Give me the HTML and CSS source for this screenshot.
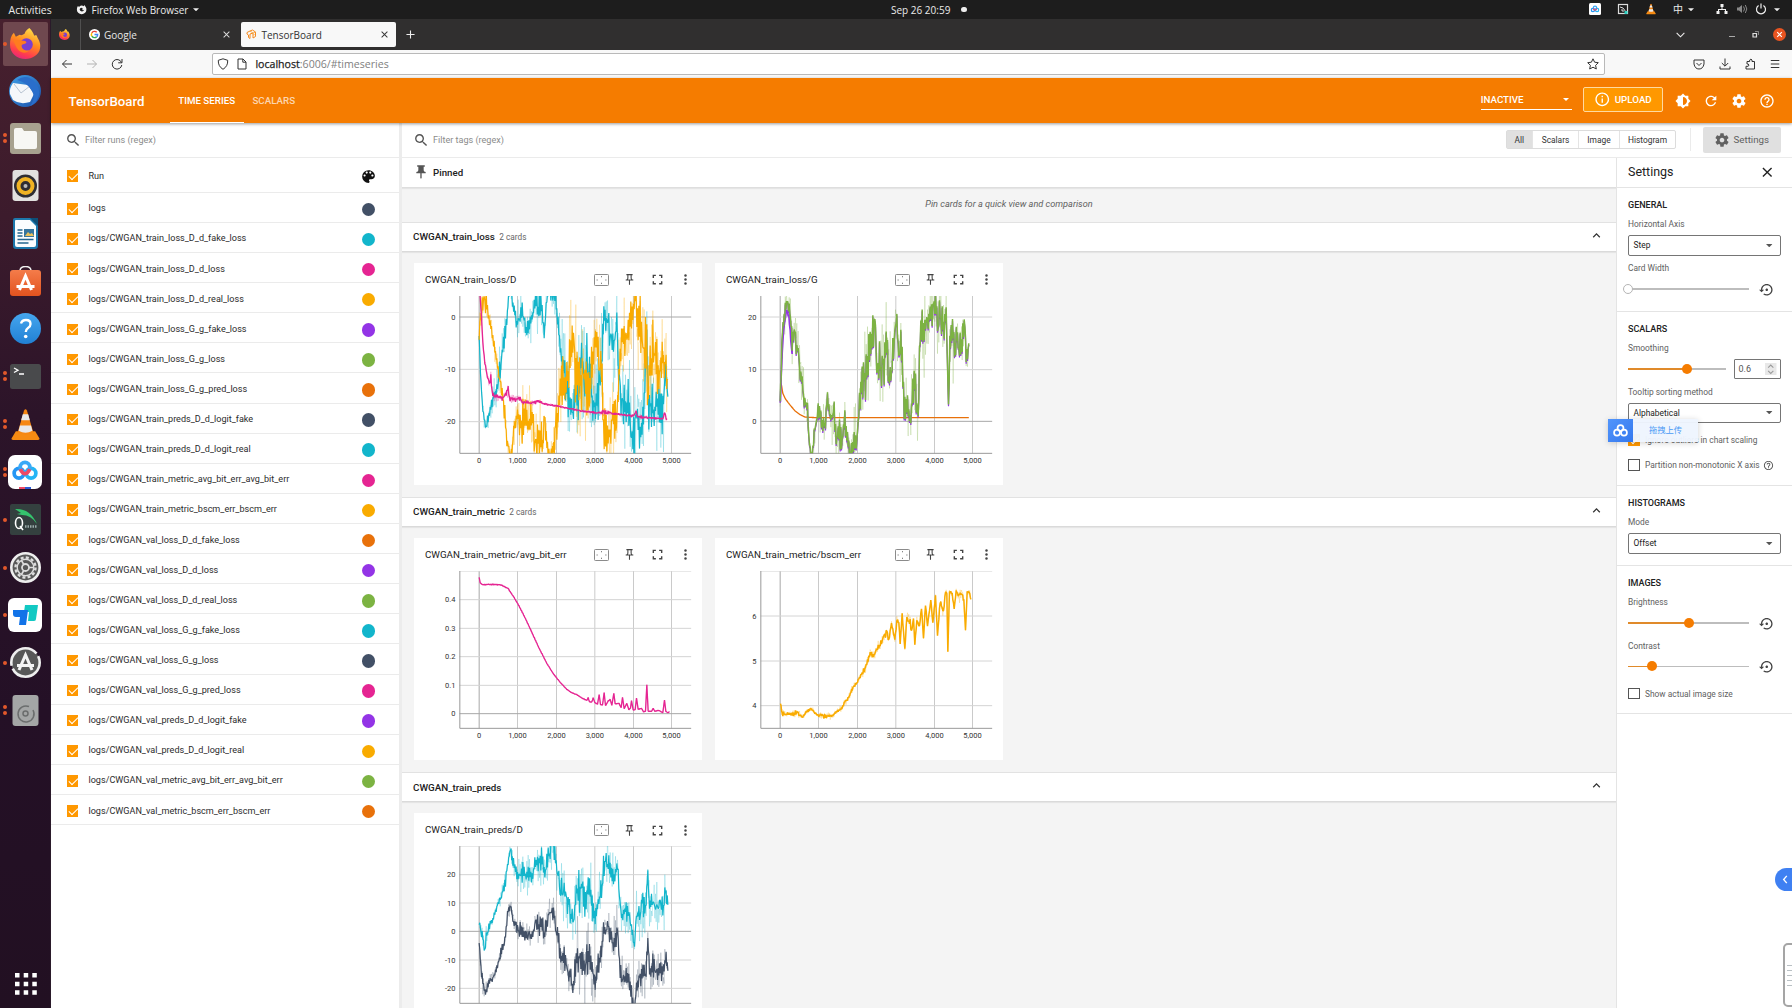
FILE: index.html
```html
<!DOCTYPE html>
<html lang="en">
<head>
<meta charset="utf-8">
<title>TensorBoard</title>
<link rel="stylesheet" href="styles.css">
</head>
<body>
<svg class="defs" aria-hidden="true">
  <defs>
    <linearGradient id="gFox" x1="0.7" y1="0" x2="0.3" y2="1"><stop offset="0" stop-color="#ffe14a"/><stop offset=".45" stop-color="#ff8a1f"/><stop offset=".8" stop-color="#ff3b4f"/><stop offset="1" stop-color="#e3267e"/></linearGradient>
    <linearGradient id="gBird" x1="0" y1="0" x2="1" y2="1"><stop offset="0" stop-color="#3fa0e8"/><stop offset="1" stop-color="#1b4fa8"/></linearGradient>
    <linearGradient id="gHelp" x1="0" y1="0" x2="0" y2="1"><stop offset="0" stop-color="#45a6ee"/><stop offset="1" stop-color="#2180d4"/></linearGradient>
    <linearGradient id="gBag" x1="0" y1="0" x2="0" y2="1"><stop offset="0" stop-color="#f47c4a"/><stop offset="1" stop-color="#e2531f"/></linearGradient>
  </defs>
  <symbol id="search" viewBox="0 0 24 24"><path d="M15.5 14h-.79l-.28-.27C15.41 12.59 16 11.11 16 9.5 16 5.91 13.09 3 9.5 3S3 5.91 3 9.5 5.91 16 9.5 16c1.61 0 3.09-.59 4.23-1.57l.27.28v.79l5 4.99L20.49 19l-4.99-5zm-6 0C7.01 14 5 11.99 5 9.5S7.01 5 9.5 5 14 7.01 14 9.5 11.99 14 9.5 14z"/></symbol>
  <symbol id="palette" viewBox="0 0 24 24"><path d="M12 3a9 9 0 0 0 0 18c.83 0 1.5-.67 1.5-1.5 0-.39-.15-.74-.39-1.01-.23-.26-.38-.61-.38-.99 0-.83.67-1.5 1.5-1.5H16c2.76 0 5-2.24 5-5 0-4.42-4.03-8-9-8zm-5.5 9c-.83 0-1.5-.67-1.5-1.5S5.67 9 6.5 9 8 9.67 8 10.5 7.33 12 6.5 12zm3-4C8.67 8 8 7.33 8 6.5S8.67 5 9.5 5s1.500.67 1.500 1.500S10.330 8 9.500 8zm5 0c-.83 0-1.500-.67-1.500-1.500S13.670 5 14.500 5s1.500.67 1.500 1.500S15.330 8 14.500 8zm3 4c-.83 0-1.500-.67-1.500-1.500S16.670 9 17.500 9s1.500.67 1.500 1.500-.67 1.500-1.500 1.500z"/></symbol>
  <symbol id="bright" viewBox="0 0 24 24"><path d="M20 15.310L23.310 12 20 8.690V4h-4.690L12 .69 8.690 4H4v4.690L.69 12 4 15.310V20h4.690L12 23.310 15.310 20H20v-4.690zM12 18V6c3.310 0 6 2.690 6 6s-2.690 6-6 6z"/></symbol>
  <symbol id="refresh" viewBox="0 0 24 24"><path d="M17.650 6.350C16.200 4.900 14.210 4 12 4c-4.420 0-7.990 3.580-7.990 8s3.570 8 7.990 8c3.730 0 6.840-2.550 7.730-6h-2.080c-.82 2.330-3.040 4-5.650 4-3.310 0-6-2.690-6-6s2.690-6 6-6c1.660 0 3.140.69 4.220 1.780L13 11h7V4l-2.350 2.350z"/></symbol>
  <symbol id="gear" viewBox="0 0 24 24"><path d="M19.430 12.980c.04-.32.07-.64.07-.98s-.03-.66-.07-.98l2.110-1.650c.19-.15.24-.42.12-.64l-2-3.460c-.12-.22-.39-.3-.61-.22l-2.490 1c-.52-.4-1.080-.73-1.690-.98l-.38-2.650C14.460 2.180 14.250 2 14 2h-4c-.25 0-.46.18-.49.42l-.38 2.650c-.61.25-1.170.59-1.690.98l-2.490-1c-.23-.09-.49 0-.61.22l-2 3.460c-.13.22-.07.49.12.64l2.110 1.650c-.04.32-.07.65-.07.98s.03.66.07.98l-2.110 1.650c-.19.15-.24.42-.12.64l2 3.460c.12.22.39.3.61.22l2.490-1c.52.4 1.080.73 1.690.98l.38 2.650c.03.24.24.42.49.42h4c.25 0 .46-.18.49-.42l.38-2.650c.61-.25 1.170-.59 1.690-.98l2.490 1c.23.09.49 0 .61-.22l2-3.460c.12-.22.07-.49-.12-.64l-2.110-1.650zM12 15.500c-1.930 0-3.500-1.570-3.500-3.500s1.570-3.500 3.500-3.500 3.500 1.570 3.500 3.500-1.570 3.500-3.500 3.500z"/></symbol>
  <symbol id="help" viewBox="0 0 24 24"><path d="M11 18h2v-2h-2v2zm1-16C6.480 2 2 6.480 2 12s4.480 10 10 10 10-4.480 10-10S17.520 2 12 2zm0 18c-4.410 0-8-3.590-8-8s3.590-8 8-8 8 3.590 8 8-3.590 8-8 8zm0-14c-2.210 0-4 1.790-4 4h2c0-1.100.9-2 2-2s2 .9 2 2c0 2-3 1.750-3 5h2c0-2.250 3-2.500 3-5 0-2.210-1.790-4-4-4z"/></symbol>
  <symbol id="info" viewBox="0 0 24 24"><path d="M11 7h2v2h-2zm0 4h2v6h-2zm1-9C6.480 2 2 6.480 2 12s4.480 10 10 10 10-4.480 10-10S17.520 2 12 2zm0 18c-4.410 0-8-3.590-8-8s3.590-8 8-8 8 3.590 8 8-3.590 8-8 8z"/></symbol>
  <symbol id="pin" viewBox="0 0 24 24"><path d="M16 9V4h1c.55 0 1-.45 1-1s-.45-1-1-1H7c-.55 0-1 .45-1 1s.45 1 1 1h1v5c0 1.660-1.340 3-3 3v2h5.970v7l1 1 1-1v-7H19v-2c-1.660 0-3-1.340-3-3z"/></symbol>
  <symbol id="pinO" viewBox="0 0 24 24"><path d="M14 4v5c0 1.120.37 2.160 1 3H9c.65-.86 1-1.900 1-3V4h4m3-2H7c-.55 0-1 .45-1 1s.45 1 1 1h1v5c0 1.660-1.340 3-3 3v2h5.970v7l1 1 1-1v-7H19v-2c-1.660 0-3-1.340-3-3V4h1c.55 0 1-.45 1-1s-.45-1-1-1z"/></symbol>
  <symbol id="full" viewBox="0 0 24 24"><path d="M3 3h6v2.600H5.600V9H3zM15 3h6v6h-2.600V5.600H15zM3 15h2.600v3.400H9V21H3zM18.400 15H21v6h-6v-2.600h3.400z"/></symbol>
  <symbol id="more" viewBox="0 0 24 24"><circle cx="12" cy="4.500" r="2.300"/><circle cx="12" cy="12" r="2.300"/><circle cx="12" cy="19.500" r="2.300"/></symbol>
  <symbol id="fit" viewBox="0 0 15 12"><rect x=".5" y=".5" width="14" height="11" rx=".8" fill="none" stroke="#8b8b8b"/><path d="M7.500 2v1.300M7.500 8.700V10M2.500 6h1.300M11.200 6h1.300" stroke="#777" stroke-width=".9" stroke-dasharray="1.300"/></symbol>
  <symbol id="up" viewBox="0 0 24 24"><path d="M12 8l-6 6 1.410 1.410L12 10.830l4.590 4.580L18 14z"/></symbol>
  <symbol id="x" viewBox="0 0 24 24"><path d="M19 6.410L17.590 5 12 10.590 6.410 5 5 6.410 10.590 12 5 17.590 6.410 19 12 13.410 17.590 19 19 17.590 13.410 12z"/></symbol>
  <symbol id="reset" viewBox="0 0 24 24"><path d="M14 12c0-1.100-.9-2-2-2s-2 .9-2 2 .9 2 2 2 2-.9 2-2zm-2-9c-4.970 0-9 4.030-9 9H0l4 4 4-4H5c0-3.870 3.130-7 7-7s7 3.130 7 7-3.130 7-7 7c-1.510 0-2.910-.49-4.060-1.300l-1.420 1.440C8.040 20.300 9.940 21 12 21c4.970 0 9-4.030 9-9s-4.030-9-9-9z"/></symbol>
  <symbol id="tri" viewBox="0 0 10 5"><path d="M0 0h10L5 5z"/></symbol>
  <symbol id="fox" viewBox="0 0 32 32"><path d="M20 0c3 3 4 5 5 8 2-1 3 0 3 1 2 4 4 7 3 12-1 7-8 11-15 11C7 32 0 26 0 17c0-5 1-9 4-12l2 4 4-2c2 1 3 0 5-1 1-3 3-5 5-6z" fill="url(#gFox)"/><circle cx="17" cy="17" r="6.500" fill="#7a3fd0"/><path d="M3 12c3 1 6 0 9 1 3 0 5 1 5 2-1 2-4 1-5 3 0 4 4 6 8 5-3 4-9 3-12-1-2-3-3-6-5-10z" fill="#ff7c1f"/></symbol>
  <symbol id="cone" viewBox="0 0 30 32"><path d="M5 23h20l4.500 7.500c0 1-.5 1.500-1.500 1.500H2c-1 0-1.500-.5-1.500-1.500z" fill="#f68b12"/><path d="M13.500 1.500Q15-.8 16.500 1.500L23 24q-8 5-16 0z" fill="#f68712"/><path d="M12.200 5.500h5.600l1.700 6h-9zM9.300 17h11.400l1.500 5.500q-7.200 4-14.400 0z" fill="#e9e9e9"/></symbol>
  <symbol id="cloud" viewBox="0 0 28 22"><g fill="none" stroke-width="4"><circle cx="7.500" cy="14" r="5.200" stroke="#2496f4"/><circle cx="20.500" cy="14" r="5.200" stroke="#25b5f5"/><circle cx="14" cy="7.500" r="5.200" stroke="#39a9f7"/><path d="M9 9.500q2 5 5 5t5-5" stroke="#ee4a66"/></g></symbol>
  <symbol id="cloudW" viewBox="0 0 28 24"><g fill="none" stroke="#fff" stroke-width="3.200"><circle cx="7.500" cy="16" r="5.500"/><circle cx="20.500" cy="16" r="5.500"/><circle cx="14" cy="7.500" r="5.500"/></g></symbol>
</svg>

<header class="topbar">
  <span class="tb-act">Activities</span>
  <svg class="tb-fox" viewBox="0 0 20 20"><path d="M3 4l3 1c2-2 5-3 8-1l1-2c4 4 5 8 3 12-3 5-10 6-14 2C1 13 1 8 3 4zm7 3l3 2-2 1c1 2 3 1 4 0-1 4-6 5-8 1-1-2 1-4 3-4z" fill="#f2f2f2" fill-rule="evenodd"/></svg>
  <span>Firefox Web Browser</span><svg class="caret" fill="#eee"><use href="#tri"/></svg>
  <span class="clock">Sep 26 20:59</span><i class="clock-dot"></i>
  <div class="tray">
    <svg style="left:0" viewBox="0 0 12 12"><rect width="12" height="12" rx="1.500" fill="#fff"/><use href="#cloud" x="1.500" y="2" width="9" height="8"/></svg>
    <svg style="left:28px" viewBox="0 0 12 12"><rect x="1.500" y="1.500" width="9" height="9" fill="none" stroke="#ddd" stroke-width="1.200"/><path d="M3 4l3 1 3 4M4 7h2v2" stroke="#ddd" fill="none"/><path d="M7.500 8h3v3h-3z" fill="#30cfc0"/></svg>
    <svg style="left:56px" viewBox="0 0 12 12"><use href="#cone" x="1" y="0" width="10" height="12"/></svg>
    <span class="ime">中</span>
    <svg class="caret" style="left:99px" fill="#eee"><use href="#tri"/></svg>
    <svg style="left:127px" viewBox="0 0 12 12"><path d="M4.500 1h3v3h-3zM.5 8h3v3h-3zM8.500 8h3v3h-3zM5.500 4h1v2H10v2H9V7H3v1H2V6h3.500z" fill="#f2f2f2"/></svg>
    <svg style="left:147px" viewBox="0 0 12 12"><path d="M1 4.500h2L6 2v8L3 7.500H1z" fill="#888"/><path d="M7.500 3.500q2 2.500 0 5M9.300 2q3 4 0 8" stroke="#888" fill="none"/></svg>
    <svg style="left:166px" viewBox="0 0 12 12"><path d="M3.600 2.500a4.500 4.500 0 1 0 4.800 0M6 .5v5" stroke="#eee" stroke-width="1.200" fill="none"/></svg>
    <svg class="caret" style="left:185px" fill="#eee"><use href="#tri"/></svg>
  </div>
</header>

<div class="desktop">
  <nav class="dock">
    <div class="app on d1"><svg viewBox="0 0 32 32"><use href="#fox"/></svg></div>
    <div class="app"><svg class="big" viewBox="0 0 34 34"><circle cx="17" cy="17" r="16" fill="url(#gBird)"/><path d="M2 20Q1 15 5 9l15 2 6 9-4 8q-10 3-17-2z" fill="#f5f7fa"/><path d="M6 10l7 9 9-7" stroke="#b9c4d2" fill="none"/><path d="M9 6q10-7 19 3 6 9 1 17-2 4-7 6 6-8 2-15-4-8-15-11z" fill="#2a6ecb"/></svg></div>
    <div class="app d2"><svg viewBox="0 0 31 31"><rect width="31" height="31" rx="3" fill="#a7a18f"/><path d="M4 7q0-2 2-2h6l2 3h11q2 0 2 2v14q0 2-2 2H6q-2 0-2-2z" fill="#f7f7f4"/></svg></div>
    <div class="app"><svg viewBox="0 0 31 31"><rect x="2.500" width="26" height="31" rx="3" fill="#e2e1df"/><circle cx="15.500" cy="16" r="11.500" fill="#2e2e33"/><circle cx="15.500" cy="16" r="7" fill="none" stroke="#f0b323" stroke-width="4"/><circle cx="15.500" cy="16" r="2" fill="#bbb"/></svg></div>
    <div class="app"><svg viewBox="0 0 31 31"><path d="M5 0h16l7 7v21q0 3-3 3H6q-3 0-3-3V2q0-2 2-2z" fill="#1d78ac"/><path d="M6 2h14l6 6v19q0 2-2 2H7q-2 0-2-2V3q0-1 1-1z" fill="#fbfdfe"/><path d="M7.500 12h5M7.500 15h5M7.500 18h5M7.500 21.500h16M7.500 25h11" stroke="#24658f" stroke-width="1.600"/><path d="M14 11h10v8H14z" fill="#36759d"/><path d="M15 18l3-4 2 2 2-1 2 3z" fill="#eac15c"/><path d="M20 0h8v8z" fill="#0d4f78"/></svg></div>
    <div class="app"><svg viewBox="0 0 31 31"><path d="M10 5q0-4.500 5.500-4.500T21 5" fill="none" stroke="#eee" stroke-width="1.500"/><rect y="4" width="31" height="26" rx="3" fill="url(#gBag)"/><path d="M9.500 24l6-14 6 14M6.500 20.500h18" stroke="#fff" stroke-width="3" fill="none"/></svg></div>
    <div class="app"><svg viewBox="0 0 31 31"><circle cx="15.500" cy="15.500" r="15.500" fill="url(#gHelp)"/><path d="M11 10.500q1-3.500 5-3.500 4.500 0 4.500 4 0 2.500-2.500 4-2.200 1.500-2.200 4" stroke="#fff" stroke-width="2.400" fill="none"/><circle cx="15.700" cy="23.500" r="1.800" fill="#fff"/></svg></div>
    <div class="app d2"><svg viewBox="0 0 31 31"><rect y="3" width="31" height="25" rx="2.500" fill="#494a4c"/><path d="M4 7l4 2.200L4 11.500M9 13h5" stroke="#fff" stroke-width="1.300" fill="none"/></svg></div>
    <div class="app d2"><svg viewBox="0 0 31 31"><use href="#cone" x="1" width="29" height="31"/></svg></div>
    <div class="app d2"><svg class="big" viewBox="0 0 34 34"><rect width="34" height="34" rx="7" fill="#fff"/><use href="#cloud" x="4" y="5" width="26" height="21"/><path d="M11 32h6v2h-6z" fill="#ee4a66"/><path d="M17 32h6v2h-6z" fill="#2a5bd7"/></svg></div>
    <div class="app d1"><svg viewBox="0 0 31 31"><rect width="31" height="31" rx="2" fill="#34403f"/><path d="M5 5q15-1 22 15-6-9-15-9l-5-1 4-1z" fill="#35c46d"/><ellipse cx="9" cy="19" rx="3.500" ry="5.500" fill="none" stroke="#fff" stroke-width="1.600"/><path d="M10 22l3 4" stroke="#fff" stroke-width="1.500"/><path d="M15 22.500h12" stroke="#9aa" stroke-width="2.500" stroke-dasharray="1.500 1"/></svg></div>
    <div class="app d1"><svg viewBox="0 0 31 31"><circle cx="15.500" cy="15.500" r="14.200" fill="#585858" stroke="#eee" stroke-width="2.600"/><circle cx="15.500" cy="15.500" r="10" fill="none" stroke="#ddd" stroke-width="2.400" stroke-dasharray="3 2.236"/><circle cx="15.500" cy="15.500" r="8.300" fill="none" stroke="#ddd" stroke-width="1.400"/><circle cx="15.500" cy="15.500" r="3.500" fill="none" stroke="#ddd" stroke-width="1.800"/><path d="M13.800 12.500L11.500 8.500M19 15.500h4.500M13.800 18.500l-2.300 4" stroke="#ddd" stroke-width="1.600"/></svg></div>
    <div class="app d1"><svg class="big" viewBox="0 0 34 34"><rect width="34" height="34" rx="6" fill="#fff"/><path d="M17 7h13l-2 14q0 2-2 2h-6l1-9h-5z" fill="#12c9c3"/><path d="M5 12h15l-2 15h-7l1-8H8q-3 0-3-3z" fill="#1173e8"/></svg></div>
    <div class="app d1"><svg viewBox="0 0 31 31"><circle cx="15.500" cy="15.500" r="14.200" fill="#585858" stroke="#eee" stroke-width="2.600" stroke-dasharray="38 3"/><path d="M9 23l6.500-15L22 23M7 18.500h17" stroke="#f4f4f4" stroke-width="3" fill="none"/></svg></div>
    <div class="app d2"><svg viewBox="0 0 31 31"><rect x="2.500" width="26" height="31" rx="3" fill="#a4a6a6"/><path d="M19 11.500a8 8 0 1 0 4 3.500" fill="none" stroke="#6b6d6d" stroke-width="1.500"/><circle cx="15.500" cy="18.500" r="2.500" fill="none" stroke="#6b6d6d" stroke-width="1.500"/></svg></div>
    <svg class="grid9" viewBox="0 0 22 22" fill="#fff"><path d="M0 0h4.500v4.500H0zM8.700 0h4.500v4.500H8.700zM17.300 0h4.500v4.500h-4.500zM0 8.700h4.500v4.500H0zM8.700 8.700h4.500v4.500H8.700zM17.300 8.700h4.500v4.500h-4.500zM0 17.300h4.500v4.500H0zM8.700 17.300h4.500v4.500H8.700zM17.300 17.300h4.500v4.500h-4.500z"/></svg>
  </nav>

  <div class="browser">
    <div class="tabs">
      <div class="tab pinned"><svg viewBox="0 0 32 32"><use href="#fox"/></svg></div>
      <div class="tab goog"><svg viewBox="0 0 22 22"><circle cx="11" cy="11" r="11" fill="#fff"/><g fill="none" stroke-width="2.800"><path d="M15.500 6.500A6.300 6.300 0 0 0 5.700 7.700" stroke="#e94335"/><path d="M5.700 7.700a6.300 6.300 0 0 0 0 6.600" stroke="#fabb05"/><path d="M5.700 14.300a6.300 6.300 0 0 0 9.500 1.500" stroke="#34a853"/><path d="M15.200 15.800A6 6 0 0 0 17.300 11H11" stroke="#4285f4"/></g></svg><span>Google</span><svg class="cl" fill="#ddd"><use href="#x"/></svg></div>
      <div class="tab active"><svg viewBox="0 0 22 22" fill="none" stroke="#f58a1f" stroke-width="2"><path d="M2 7l6-3 5-2 6 4v9l-5 3V8L8 10v9l-3-2v-5L2 10z"/><path d="M8 4l6 4 5-2M14 12l3-1" stroke="#f9ad4e"/></svg><span>TensorBoard</span><svg class="cl" fill="#333"><use href="#x"/></svg></div>
      <svg class="plus" viewBox="0 0 10 10"><path d="M5 .5v9M.5 5h9" stroke="#eee" stroke-width="1.200"/></svg>
      <div class="wm">
        <svg class="wm-v" viewBox="0 0 10 6"><path d="M.7.7L5 5 9.300.7" fill="none" stroke="#eee" stroke-width="1.200"/></svg>
        <i class="wm-min"></i>
        <svg class="wm-max" viewBox="0 0 7 7"><path d="M1 2.500h3.500V6H1z" fill="none" stroke="#ddd" stroke-width="1.200"/><path d="M3 .5h3.500V4" fill="none" stroke="#999" stroke-width=".8"/></svg>
        <svg class="wm-x" viewBox="0 0 13 13"><circle cx="6.500" cy="6.500" r="6.500" fill="#e95420"/><path d="M4.200 4.200l4.600 4.600M8.800 4.200L4.200 8.800" stroke="#fff" stroke-width="1.200"/></svg>
      </div>
    </div>

    <div class="navbar">
      <svg class="nv" viewBox="0 0 12 12"><path d="M11 6H1.500M5.500 2l-4 4 4 4" class="ln"/></svg>
      <svg class="nv dim" viewBox="0 0 12 12"><path d="M1 6h9.500M6.500 2l4 4-4 4" class="ln"/></svg>
      <svg class="nv" viewBox="0 0 12 12"><path d="M10.500 4.500A4.800 4.800 0 1 0 10.800 7M11 1v3.800H7.200" class="ln"/></svg>
      <div class="url">
        <svg viewBox="0 0 12 12"><path d="M6 .8l4.700 1.500q.3 6-4.700 9-5-3-4.700-9z" class="ln"/></svg>
        <svg viewBox="0 0 12 12"><path d="M2 1h5l3 3v7H2zM6.800 1v3.200H10" class="ln"/></svg>
        <span><b>localhost</b>:6006/#timeseries</span>
        <svg class="star" viewBox="0 0 12 12"><path d="M6 .8l1.600 3.400 3.700.5-2.700 2.600.7 3.700L6 9.200 2.700 11l.7-3.700L.7 4.700l3.700-.5z" class="ln"/></svg>
      </div>
      <svg class="nv nv-p" viewBox="0 0 12 12"><path d="M1 2h10v4q-1 5-5 5T1 6zM3.500 5L6 7.500 8.500 5" class="ln"/></svg>
      <svg class="nv" viewBox="0 0 12 12"><path d="M6 .5v7.500M2.800 5L6 8.200 9.200 5M1 8.500v2.500h10V8.500" class="ln"/></svg>
      <svg class="nv" viewBox="0 0 12 12"><path d="M2 11h8.500V3.500H8V2q-1-1.800-2.300 0v1.500H3V6h1.200q1.500 1 0 2.300H2z" class="ln"/></svg>
      <svg class="nv" viewBox="0 0 12 12"><path d="M1.800 2.500h8.500M1.800 6h8.500M1.800 9.500h8.500" class="ln"/></svg>
    </div>

    <div class="tbhead">
      <span class="brand">TensorBoard</span>
      <span class="ttab sel">TIME SERIES</span><span class="ttab">SCALARS</span>
      <div class="inactive"><span>INACTIVE</span><svg fill="#fff"><use href="#tri"/></svg></div>
      <div class="upload"><svg fill="#fff"><use href="#info"/></svg>UPLOAD</div>
      <svg class="hi" fill="#fff"><use href="#bright"/></svg><svg class="hi" fill="#fff"><use href="#refresh"/></svg><svg class="hi" fill="#fff"><use href="#gear"/></svg><svg class="hi" fill="#fff"><use href="#help"/></svg>
    </div>

    <div class="body">
      <aside class="runs">
        <div class="filter"><svg><use href="#search"/></svg>Filter runs (regex)</div>
        <div class="run head"><i class="cb"></i><span>Run</span><svg class="pal"><use href="#palette"/></svg></div>
        <div id="runs"></div>
      </aside>
      <main class="main">
        <div class="toolbar">
          <div class="filter"><svg><use href="#search"/></svg>Filter tags (regex)</div>
          <div class="toggle"><span class="on w1">All</span><span class="w2">Scalars</span><span class="w3">Image</span><span class="w4">Histogram</span></div>
          <i class="tsep"></i>
          <div class="setbtn"><svg fill="#616161"><use href="#gear"/></svg>Settings</div>
        </div>
        <div class="split">
          <div class="cards" id="cards">
            <div class="pinhead"><svg fill="#555"><use href="#pin"/></svg>Pinned</div>
            <div class="pinmsg">Pin cards for a quick view and comparison</div>
          </div>
          <aside class="settings">
            <div class="stitle">Settings<svg fill="#222"><use href="#x"/></svg></div>
            <section>
              <h3>GENERAL</h3><label>Horizontal Axis</label>
              <div class="select">Step<svg><use href="#tri"/></svg></div>
              <label class="gap">Card Width</label>
              <div class="srow"><div class="slider"><i class="knob hollow" style="left:0%"></i></div><svg class="rs"><use href="#reset"/></svg></div>
            </section>
            <section class="s2">
              <h3>SCALARS</h3><label>Smoothing</label>
              <div class="srow"><div class="slider short"><i class="fill" style="width:60%"></i><i class="knob" style="left:60%"></i></div><div class="num">0.6<svg viewBox="0 0 11 12"><rect width="11" height="12" fill="#e8e8e8"/><path d="M3 4.500L5.500 2 8 4.500M3 7.500L5.500 10 8 7.500" fill="none" stroke="#999"/></svg></div></div>
              <label class="gap">Tooltip sorting method</label>
              <div class="select">Alphabetical<svg><use href="#tri"/></svg></div>
              <div class="crow first"><i class="cb"></i>Ignore outliers in chart scaling</div>
              <div class="crow"><i class="cb off"></i>Partition non-monotonic X axis<svg><use href="#help"/></svg></div>
            </section>
            <section class="s3">
              <h3>HISTOGRAMS</h3><label>Mode</label>
              <div class="select">Offset<svg><use href="#tri"/></svg></div>
            </section>
            <section class="s4">
              <h3>IMAGES</h3><label>Brightness</label>
              <div class="srow"><div class="slider"><i class="fill" style="width:50%"></i><i class="knob" style="left:50%"></i></div><svg class="rs"><use href="#reset"/></svg></div>
              <label class="gap">Contrast</label>
              <div class="srow"><div class="slider"><i class="fill" style="width:20%"></i><i class="knob" style="left:20%"></i></div><svg class="rs"><use href="#reset"/></svg></div>
              <div class="crow first"><i class="cb off"></i>Show actual image size</div>
            </section>
          </aside>
        </div>
      </main>
    </div>
  </div>
</div>

<div class="drop"><span class="drop-i"><svg><use href="#cloudW"/></svg></span><span class="drop-t">拖拽上传</span></div>
<div class="side-pill"><svg viewBox="0 0 6 10"><path d="M5 1L1.500 5 5 9" fill="none" stroke="#fff" stroke-width="1.500"/></svg></div>
<div class="side-note"><i></i><i></i><i></i><i></i><i></i></div>
<script src="app.js"></script>
</body>
</html>
```
FILE: styles.css
```css
* { box-sizing: border-box; }
body { margin: 0; width: 1792px; height: 1008px; overflow: hidden; background: #fff; font-family: Roboto, "Noto Sans CJK SC", sans-serif; color: #212121; position: relative; }
svg { display: block; flex: none; }
i { display: block; flex: none; }
.defs { position: absolute; width: 0; height: 0; }

.topbar { height: 19px; background: #1d1d1d; color: #eaeaea; font: 10px/18px "Open Sans", sans-serif; display: flex; align-items: center; padding: 0 0 0 8.500px; position: relative; }
.tb-act { font-size: 10.500px; width: 67px; }
.tb-fox { width: 11px; height: 11px; margin-right: 5px; }
.caret { width: 6px; height: 3.500px; margin-left: 4.500px; }
.clock { position: absolute; left: 891px; }
.clock-dot { position: absolute; left: 961px; top: 6.500px; width: 5.500px; height: 5.500px; border-radius: 50%; background: #eee; }
.tray { position: absolute; left: 1588.500px; top: 3px; width: 200px; height: 12px; }
.tray svg { position: absolute; top: 0; width: 12px; height: 12px; }
.tray .caret { top: 4.500px; width: 6px; height: 3.500px; margin: 0; }
.ime { position: absolute; left: 84.500px; top: -3px; font-family: "Noto Sans CJK SC", sans-serif; }

.desktop { display: flex; height: 989px; }
.dock { width: 50.500px; background: linear-gradient(#47202e 0, #3c1b2c 20%, #2c1429 40%, #241026 70%, #221022 100%); display: flex; flex-direction: column; border-right: 1px solid #2a1a2a; }
.app { height: 47.650px; display: flex; align-items: center; justify-content: center; position: relative; flex: none; padding: .5px 0 0 .7px; }
.app svg { width: 31px; height: 31px; position: relative; }
.app svg.big { width: 34px; height: 34px; }
.app.on::before { content: ""; position: absolute; left: 3px; top: 2.500px; width: 45px; height: 44.500px; border-radius: 2px; background: #6f484f; }
.app.d1::after, .app.d2::after { content: ""; position: absolute; left: 3px; top: 22.500px; width: 4px; height: 4px; border-radius: 50%; background: #e2582b; }
.app.d2::after { top: 19px; box-shadow: 0 6px 0 #e2582b; }
.grid9 { width: 22px; height: 22px; margin: auto auto 13px 14.500px; }

.browser { flex: 1; display: flex; flex-direction: column; min-width: 0; }
.tabs { height: 31px; background: #302f2f; display: flex; align-items: center; font: 10px/20px "Open Sans", sans-serif; color: #e6e6e6; flex: none; }
.tab { display: flex; align-items: center; height: 31px; }
.tab svg { width: 11px; height: 11px; margin-right: 4.500px; }
.tab svg.cl { width: 11px; height: 11px; margin: 0 6px 0 auto; }
.pinned { width: 30px; border-right: 1px solid #505050; padding-left: 8.500px; }
.goog { width: 155px; padding-left: 8px; }
.tab.goog svg.cl { margin-right: 4px; }
.active { width: 155px; height: 25px; margin-left: 5px; background: #f8f8f8; color: #333; border-radius: 2px; padding-left: 5.500px; }
.plus { width: 9px; height: 9px; margin-left: 10px; }
.wm { margin-left: auto; display: flex; align-items: center; padding-right: 6.500px; }
.wm-v { width: 9px; height: 6px; }
.wm-min { width: 6px; height: 1px; background: #aaa; margin: 4px 0 0 44px; }
.wm-max { width: 7px; height: 7px; margin-left: 17px; }
.wm-x { width: 13px; height: 13px; margin-left: 14px; }

.navbar { height: 28px; background: #f8f8f8; display: flex; align-items: center; padding: 0 11px 0 10.500px; flex: none; }
.ln { fill: none; stroke: #333; stroke-width: 1; }
.nv { width: 12px; height: 12px; margin-right: 13.200px; }
.nv:last-child { margin-right: 0; }
.dim { opacity: .35; }
.url { width: 1392.500px; height: 22.500px; margin-left: 75.500px; background: #fff; border: 1px solid #b9b9b9; border-radius: 2px; display: flex; align-items: center; font: 10.600px/20px "Open Sans", sans-serif; color: #808080; padding-left: 4px; }
.url b { color: #222; font-weight: 400; -webkit-text-stroke: .25px #222; }
.url svg { width: 12px; height: 12px; margin-right: 7.200px; }
.url .star { margin: 0 4.500px 0 auto; }
.nv-p { margin-left: auto; }

.tbhead { height: 45px; background: #f57c00; color: #fff; display: flex; align-items: center; padding: 0 17px 0 18px; font-weight: 500; position: relative; z-index: 2; box-shadow: 0 1px 3px rgba(0,0,0,.4); flex: none; }
.brand { font-size: 13.250px; width: 101px; white-space: nowrap; padding-top: 1px; }
.ttab { font-size: 9.750px; line-height: 46px; height: 45px; padding: 0 8.700px; color: rgba(255,255,255,.7); }
.ttab.sel { color: #fff; border-bottom: 1.500px solid #fff; }
.inactive { margin-left: auto; width: 91.500px; height: 19.500px; margin-top: -1px; border-bottom: 1px solid #fff; font-size: 9.750px; line-height: 18px; display: flex; align-items: center; justify-content: space-between; padding: 0 3.500px 0 0; }
.inactive svg { width: 6px; height: 3px; }
.upload { width: 80px; height: 25.500px; margin: -2px 11.500px 0 11px; background: #ff9800; border: 1px solid #ffd9a0; border-radius: 2px; display: flex; align-items: center; font-size: 9.750px; padding: 0 0 0 10px; }
.upload svg { width: 16.500px; height: 16.500px; margin-right: 4px; }
.hi { width: 16px; height: 16px; margin-right: 12.100px; margin-top: 1px; }
.hi:last-child { margin-right: 0; }

.body { flex: 1; display: flex; min-height: 0; }
.runs { width: 351.500px; border-right: 3px solid #ececec; flex: none; }
.filter { height: 34.500px; display: flex; align-items: center; font-size: 9.070px; color: #8b8b8b; padding: 1px 0 0 14px; }
.filter svg { width: 16.500px; height: 16.500px; margin-right: 4px; fill: #555; }
.runs .filter { border-bottom: 1px solid #ebebeb; }
.run { height: 30.110px; border-bottom: 1px solid #ebebeb; display: flex; align-items: center; font-size: 9.070px; padding: 3px 24px 0 16px; color: #2b2b2b; }
.run span { margin-left: 10.500px; margin-top: -1px; flex: 1; }
.run.head { height: 35.300px; }
.cb { width: 11.500px; height: 11.500px; background: #ff9800; position: relative; }
.cb::after { content: ""; position: absolute; left: 2px; top: 2.500px; width: 7.500px; height: 4px; border: solid #fff; border-width: 0 0 1.300px 1.300px; transform: rotate(-45deg); }
.cb.off { background: #fff; border: 1.300px solid #555; }
.cb.off::after { display: none; }
.dot { width: 13.500px; height: 13.500px; border-radius: 50%; margin-top: 1px; }
.pal { width: 17px; height: 17px; margin-right: -1.500px; fill: #111; }

.main { flex: 1; display: flex; flex-direction: column; min-width: 0; }
.toolbar { height: 34.500px; display: flex; align-items: center; border-bottom: 1px solid #ebebeb; flex: none; padding-right: 11px; }
.toolbar .filter { padding-left: 10.500px; }
.toggle { margin-left: auto; height: 19px; display: flex; border: 1px solid #dcdcdc; border-radius: 2px; font-size: 8.400px; line-height: 18.500px; text-align: center; color: #333; }
.toggle span + span { border-left: 1px solid #e4e4e4; }
.toggle .on { background: #e0e0e0; }
.w1 { width: 25.500px; } .w2 { width: 46px; } .w3 { width: 41px; } .w4 { width: 56px; }
.tsep { width: 1px; height: 23px; background: #ebebeb; margin: 0 11.500px 0 14px; }
.setbtn { width: 78.500px; height: 26px; background: #e0e0e0; border-radius: 2px; display: flex; align-items: center; font-size: 9.750px; color: #616161; padding-left: 11.500px; }
.setbtn svg { width: 16px; height: 16px; margin-right: 3.500px; }
.split { flex: 1; display: flex; min-height: 0; }
.cards { flex: 1; background: #f4f4f4; min-width: 0; overflow: hidden; }
.pinhead { height: 30.500px; background: #fff; border-bottom: 1px solid #dedede; display: flex; align-items: center; padding: 0 0 0 10.500px; font-size: 9.700px; font-weight: 500; box-shadow: 0 1px 1px rgba(0,0,0,.06); }
.pinhead svg { width: 16px; height: 16px; margin-right: 4.500px; }
.pinmsg { height: 34px; font-size: 9.170px; font-style: italic; line-height: 32px; text-align: center; color: #616161; }
.ghead { height: 29.500px; background: #fff; border-top: 1px solid #e2e2e2; border-bottom: 1px solid #dadada; box-shadow: 0 1px 1px rgba(0,0,0,.06); display: flex; align-items: center; padding: 0 12px 0 11px; font-size: 9.800px; font-weight: 500; }
.ghead small { font-size: 8.250px; font-weight: 400; color: #666; margin: 1px 0 0 4.500px; flex: 1; }
.ghead svg { width: 15px; height: 15px; fill: #333; margin-top: -3px; }
.gbody { height: 245.700px; padding: 11px 12px; display: flex; gap: 13px; }
.card { width: 288px; height: 222.500px; background: #fff; display: flex; flex-direction: column; }
.chead { height: 33.500px; display: flex; align-items: center; padding: 0 10px 0 11px; font-size: 9.740px; flex: none; }
.chead span { flex: 1; white-space: nowrap; }
.chead svg { width: 13px; height: 13px; fill: #444; margin-left: 15px; margin-top: 1px; }
.chead svg.fit { width: 15px; height: 12px; margin: 1px 0 0 0; }
.chead svg.fit + svg { margin-left: 14px; }
.plot { width: 288px; height: 188px; overflow: hidden; }
.plot text { font: 22.500px Roboto, sans-serif; fill: #333; }

.settings { width: 176px; border-left: 1px solid #e4e4e4; background: #fff; }
.stitle { height: 30.500px; border-bottom: 1px solid #e4e4e4; display: flex; align-items: center; justify-content: space-between; font-size: 12.460px; padding: 0 17px 1.500px 11px; }
.stitle svg { width: 16.500px; height: 16.500px; margin-top: 2px; }
.settings section { padding: 7px 11px 11.500px 11px; border-bottom: 1px solid #e4e4e4; height: 124px; }
.settings .s2 { height: 174px; }
.settings .s3 { height: 80px; }
.settings .s4 { height: 148px; }
.settings h3 { margin: 0; font-size: 9px; font-weight: 500; line-height: 20px; height: 20px; }
.settings label { display: block; font-size: 8.400px; line-height: 19.500px; height: 20px; color: #616161; }
.settings .gap { margin-top: 3.500px; }
.select { height: 20.500px; margin-top: 0; border: 1px solid #757575; border-radius: 2px; display: flex; align-items: center; justify-content: space-between; font-size: 8.400px; padding: 0 7.500px 0 4.500px; margin-bottom: .5px; }
.select svg { width: 6.500px; height: 3.300px; fill: #555; }
.srow { height: 20px; display: flex; align-items: center; justify-content: space-between; }
.slider { width: 121px; height: 1.500px; background: #bdbdbd; position: relative; }
.slider.short { width: 97.500px; }
.fill { height: 1.500px; background: #e08a2a; }
.knob { position: absolute; top: -4.300px; width: 10px; height: 10px; margin-left: -5px; border-radius: 50%; background: #f57c00; }
.knob.hollow { background: #fff; border: 1.500px solid #b5b5b5; }
.rs { width: 15.500px; height: 15.500px; margin: 1px 6.500px 0 0; fill: #444; }
.num { width: 47px; height: 20px; border: 1px solid #757575; border-radius: 1px; display: flex; align-items: center; justify-content: space-between; font-size: 9px; color: #555; padding: 0 3.500px; }
.num svg { width: 11.500px; height: 12.500px; }
.crow { height: 20px; display: flex; align-items: center; font-size: 8.400px; color: #616161; margin-top: 5px; white-space: nowrap; }
.crow.first { margin-top: 7px; }
.crow .cb { margin-right: 5.500px; }
.crow svg { width: 11px; height: 11px; fill: #555; margin-left: 3.500px; }

.drop { position: absolute; left: 1608px; top: 419px; height: 23px; width: 90px; display: flex; background: rgba(238,245,254,.96); box-shadow: 0 1px 6px rgba(0,0,0,.18); }
.drop-i { width: 25px; background: linear-gradient(135deg,#5295fb,#3478ee); display: flex; align-items: center; justify-content: center; }
.drop-i svg { width: 15px; height: 13px; }
.drop-t { flex: 1; font: 8.300px/21px "Noto Sans CJK SC", sans-serif; color: #4a9af5; text-align: center; }
.side-pill { position: absolute; left: 1775px; top: 868px; width: 17px; height: 23px; border-radius: 12px 0 0 12px; background: #3f80f2; }
.side-pill svg { width: 6px; height: 9px; margin: 7px 0 0 7px; }
.side-note { position: absolute; left: 1783px; top: 943px; width: 14px; height: 64px; border: 2px solid #a5a5a5; border-radius: 5px; background: #fff; padding: 19.500px 0 0 2px; display: flex; flex-direction: column; gap: 4px; }
.side-note i { height: 1px; background: #b9c0c4; }
```
FILE: app.js
```js
const C = { slate: '#425066', teal: '#12b5cb', pink: '#e52592', amber: '#f9ab00', purple: '#9334e6', green: '#7cb342', orange: '#e8710a' };
const runs = [
  ['logs', 'slate'], ['train_loss_D_d_fake_loss', 'teal'], ['train_loss_D_d_loss', 'pink'],
  ['train_loss_D_d_real_loss', 'amber'], ['train_loss_G_g_fake_loss', 'purple'], ['train_loss_G_g_loss', 'green'],
  ['train_loss_G_g_pred_loss', 'orange'], ['train_preds_D_d_logit_fake', 'slate'], ['train_preds_D_d_logit_real', 'teal'],
  ['train_metric_avg_bit_err_avg_bit_err', 'pink'], ['train_metric_bscm_err_bscm_err', 'amber'],
  ['val_loss_D_d_fake_loss', 'orange'], ['val_loss_D_d_loss', 'purple'], ['val_loss_D_d_real_loss', 'green'],
  ['val_loss_G_g_fake_loss', 'teal'], ['val_loss_G_g_loss', 'slate'], ['val_loss_G_g_pred_loss', 'pink'],
  ['val_preds_D_d_logit_fake', 'purple'], ['val_preds_D_d_logit_real', 'amber'],
  ['val_metric_avg_bit_err_avg_bit_err', 'green'], ['val_metric_bscm_err_bscm_err', 'orange']
];
document.getElementById('runs').innerHTML = runs.map(([n, c]) =>
  `<div class="run"><i class="cb"></i><span>${n === 'logs' ? n : 'logs/CWGAN_' + n}</span><i class="dot" style="background:${C[c]}"></i></div>`).join('');

// Seeded noise so that every load draws the same curves.
function rng(seed) {
  let s = seed * 7919 + 13;
  return () => { s = (s * 1664525 + 1013904223) % 4294967296; return s / 2147483648 - 1; };
}

// Points are x, y, jitter triples; jitter is interpolated along with y.
function trace(pts, seed, gain, dy) {
  const r = rng(seed), out = [];
  let side = 1;
  for (let i = 0; i < pts.length - 3; i += 3) {
    const [x0, y0, a0, x1, y1, a1] = pts.slice(i, i + 6);
    const n = Math.max(1, Math.round((x1 - x0) / 2));
    for (let k = 0; k < n; k++) {
      const t = k / n, v = side * Math.abs(r()) * 0.8 + r() * 0.45;
      side = -side;
      out.push((x0 + (x1 - x0) * t).toFixed(1) + ' ' + (y0 + (y1 - y0) * t + (a0 + (a1 - a0) * t) * v * gain + dy).toFixed(1));
    }
  }
  out.push(pts[pts.length - 3] + ' ' + (pts[pts.length - 2] + dy));
  return 'M' + out.join('L');
}

const lossD = {
  title: 'CWGAN_train_loss/D', top: 528, x: 178, yt: [[591, '0'], [748, '-10'], [905, '-20']], zero: 591, series: [
    { c: 'teal', gain: 2, soft: 3.6, p: [237,648,0,241,760,5,246,850,8,252,900,8,256,920,6,262,910,10,268,880,10,280,840,14,292,790,18,300,740,20,310,660,20,320,610,16,325,530,8,330,500,5,335,528,10,344,590,16,352,612,16,362,570,20,370,595,20,378,640,14,388,620,18,398,590,20,406,540,26,412,570,26,420,540,26,426,590,20,432,650,14,438,545,15,446,500,10,456,530,26,466,530,26,474,600,16,480,690,22,490,740,38,500,790,38,510,850,30,520,890,20,527,790,50,536,790,50,546,720,55,556,770,55,568,720,55,576,830,45,586,850,30,596,820,50,606,700,40,611,590,20,624,600,32,634,650,35,642,690,35,650,610,40,657,790,35,668,860,40,676,880,40,684,880,45,694,950,40,702,955,45,710,860,40,720,940,45,730,880,40,740,660,30,744,850,50,756,860,42,766,850,42,778,880,32,790,850,42,796,750,25,803,830,20] },
    { c: 'amber', gain: 2, soft: 3.4, p: [237,640,10,241,590,12,246,560,16,252,530,22,258,535,22,264,580,14,274,630,11,284,690,11,294,750,12,304,800,16,314,880,18,322,960,16,330,1010,10,337,970,16,344,920,18,352,880,28,362,920,28,372,880,28,384,910,26,396,890,26,402,960,30,410,990,26,420,930,36,428,980,28,433,890,20,440,980,15,450,1010,10,457,990,22,466,940,28,474,880,26,480,800,40,490,770,40,500,760,36,508,700,40,520,640,30,527,770,55,536,800,55,546,800,55,556,760,50,566,820,50,576,740,45,586,650,35,596,720,45,606,790,36,612,930,34,622,950,36,632,910,40,642,890,45,649,920,45,656,760,36,664,660,30,674,650,35,684,640,30,692,600,30,700,560,25,706,525,12,712,640,36,720,610,42,730,680,42,740,660,55,743,860,30,748,700,42,756,690,42,766,720,45,778,770,36,788,690,36,796,740,50,803,780,15] },
    { c: 'pink', w: 4, gain: 1.4, soft: 2.6, p: [238,500,0,244,590,2,248,670,4,254,725,5,260,765,4,268,790,6,272,765,8,276,822,6,290,830,6,306,835,5,318,825,7,324,806,8,328,836,6,350,838,5,360,832,6,366,846,4,400,848,4,414,843,4,430,851,2,470,858,2,510,866,2,550,874,2,590,879,3,612,876,5,650,882,2,700,888,3,708,872,1,712,890,3,740,892,3,788,897,2,794,876,2,798,897,2,801,898,0] }
  ]
};
const gp = [240,545,5,243,450,25,247,340,25,252,290,25,257,250,14,263,255,16,269,275,20,276,375,18,282,330,18,290,375,22,298,435,22,306,500,22,314,550,18,322,570,12,326,650,8,332,710,5,338,690,10,344,625,14,350,590,18,358,575,18,366,610,16,374,610,16,380,550,22,388,570,18,396,590,30,402,590,22,408,660,22,418,650,30,426,680,15,434,600,38,440,640,28,448,690,18,456,690,22,462,640,32,468,670,26,474,600,12,482,500,36,490,470,38,498,450,38,506,400,38,516,350,38,524,305,18,530,440,40,538,430,42,546,430,38,552,440,42,558,350,35,566,450,38,574,450,32,582,350,30,588,290,15,594,390,32,606,400,32,612,560,24,620,560,36,628,580,30,638,540,36,644,470,40,650,540,45,654,600,16,658,390,25,664,320,25,672,350,30,680,280,34,686,305,25,694,260,32,706,255,26,714,300,40,724,290,34,732,330,24,738,285,24,745,555,8,749,360,28,757,340,32,763,390,36,770,330,26,778,400,20,786,360,30,794,310,25,798,430,18,806,370,10];
const lossG = {
  title: 'CWGAN_train_loss/G', top: 228, x: 181, yt: [[291, '20'], [449, '10'], [604, '0']], zero: 604, series: [
    { c: 'orange', w: 4, soft: 0, p: [243,490,0,248,520,0,256,537,0,268,553,0,284,572,0,300,584,0,314,591,0,326,592,0,350,593,0,806,593,0] },
    { c: 'purple', gain: 1.9, seed: 3, p: gp, dy: 5, soft: 0 },
    { c: 'purple', w: 5, soft: 0, p: [241,545,0,243,470,6,248,360,10,254,300,10,260,272,10,266,290,8,272,360,8,276,402,4] },
    { c: 'green', gain: 1.9, soft: 3.4, seed: 3, w: 4.5, p: gp }
  ]
};
const bit = {
  title: 'CWGAN_train_metric/avg_bit_err', top: 243, x: 178, yt: [[329, '0.4'], [415, '0.3'], [500, '0.2'], [586, '0.1'], [671, '0']], zero: 671, series: [
    { c: 'pink', w: 4, soft: 1.4, p: [237,262,0,240,278,0,246,284,1.5,280,283,2,302,285,1.5,314,290,1.5,324,296,1.5,340,320,1.5,353,341,1.5,374,382,1.5,395,427,1.5,416,473,1.5,440,520,1,460,552,1,480,577,1,500,598,1,514,608,1,530,614,1,545,624,1,560,631,1,564,623,1,568,636,1,575,636,1,579,623,0,584,638,1,592,642,1,597,614,0,601,644,0,607,645,0,612,608,0,616,647,1,624,634,2,630,628,0,635,646,0,641,610,0,645,642,1,656,640,2,663,653,0,667,622,0,672,656,0,680,640,0,686,659,1,691,654,0,694,632,0,699,660,1,705,659,0,709,624,0,714,658,1,724,655,0,730,665,1,736,664,0,740,584,0,744,664,1,754,664,0,759,655,0,764,664,1,775,661,1,788,668,0,793,630,0,797,664,0,803,668,0,808,665,0] }
  ]
};
const bscm = {
  title: 'CWGAN_train_metric/bscm_err', top: 243, x: 181, yt: [[378, '6'], [513, '5'], [647, '4']], series: [
    { c: 'amber', w: 4.5, soft: 2.4, gain: 1.2, p: [241,640,4,246,670,6,270,672,5,290,667,7,308,681,4,320,664,4,332,656,3,350,675,6,375,680,6,398,678,4,410,664,4,422,658,5,432,640,7,445,622,6,460,590,5,472,576,4,486,545,8,494,540,8,502,512,5,512,490,9,520,496,7,530,478,6,540,464,9,550,442,8,560,425,10,566,450,6,574,402,5,584,448,4,590,390,8,596,395,8,600,460,2,606,374,4,614,478,2,620,380,6,630,400,12,634,424,6,640,385,3,644,462,2,650,392,6,658,408,3,664,352,5,670,446,2,676,342,5,682,408,3,692,330,3,698,400,2,706,318,4,712,436,2,720,335,8,730,365,8,736,305,4,740,308,4,743,485,0,748,304,3,756,312,5,762,355,3,768,302,4,776,320,10,786,312,12,791,330,4,796,420,2,801,308,5,807,305,5,812,328,5] }
  ]
};
const preal = [237,490,5,244,525,10,250,540,12,254,578,6,258,530,12,266,505,8,278,478,6,290,440,5,302,410,8,314,375,10,322,320,10,331,268,8,338,310,12,346,335,12,356,345,16,366,335,18,376,360,16,386,345,16,396,350,14,406,310,20,414,320,20,424,300,20,432,345,22,440,300,18,448,278,18,454,262,18,460,270,18,468,320,16,474,345,18,482,400,22,492,390,25,500,420,22,510,460,20,520,490,16,528,385,35,538,400,34,546,390,36,556,430,32,566,380,32,576,430,26,585,490,14,594,420,24,604,390,24,610,315,18,622,300,20,634,340,24,644,350,24,652,310,25,660,440,22,670,470,20,678,455,18,686,470,20,694,500,18,703,560,8,709,460,25,720,465,24,730,440,26,738,425,25,743,340,8,748,450,22,758,430,26,770,440,22,780,425,18,790,440,28,796,390,16,803,435,8];
// The fake logits follow the real ones with a gap that widens up to step 1,500.
const pfake = preal.map((v, i) => i % 3 === 1 ? v + 165 + 33 * Math.min(1, Math.max(0, (preal[i - 1] - 330) / 170)) : v);
[[1, 548], [4, 640], [7, 675], [10, 690], [13, 690], [16, 668], [19, 655], [22, 625], [25, 580], [28, 545], [31, 460], [34, 440]].forEach(([i, v]) => { pfake[i] = v; });
const preds = {
  title: 'CWGAN_train_preds/D', top: 259, x: 178, noX: true, yt: [[345, '20'], [430, '10'], [515, '0'], [601, '-10'], [686, '-20']], zero: 515, series: [
    { c: 'teal', gain: 1.8, soft: 3.4, p: preal }, { c: 'slate', gain: 1.6, soft: 3, p: pfake }
  ]
};

function chart(g, id) {
  const l = g.x, r = l + 695, b = g.top + 472;
  const xs = [59, 174, 291, 406, 522, 636].map(v => v + l);
  let s = `<svg class="plot" viewBox="${l - 136.5} ${g.top} 864 564"><clipPath id="c${id}"><rect x="${l}" y="${g.top}" width="695" height="472"/></clipPath>`;
  xs.forEach((x, i) => s += `<path d="M${x} ${g.top}V${b}" stroke="${i ? '#cacaca' : '#a8a8a8'}" stroke-width="3"/>`);
  g.yt.forEach(([y]) => s += `<path d="M${l} ${y}H${r}" stroke="${y === g.zero ? '#a8a8a8' : '#d4d4d4'}" stroke-width="3"/>`);
  if (g.top > 240 && g.top < 300) s += `<path d="M${l} ${g.top + 1}H${r}" stroke="#d4d4d4" stroke-width="2"/>`;
  s += `<path d="M${l + 1} ${g.top}V${b}H${r}" fill="none" stroke="#999" stroke-width="3"/><g clip-path="url(#c${id})" fill="none" stroke-linejoin="bevel">`;
  g.series.forEach((q, i) => {
    if (q.soft !== 0) s += `<path d="${trace(q.p, 91 + i * 7 + id, q.soft || 2.7, q.dy || 0)}" stroke="${C[q.c]}" stroke-opacity=".27" stroke-width="2.6"/>`;
  });
  g.series.forEach((q, i) => {
    s += `<path d="${trace(q.p, q.seed || 17 + id + i * 5, q.gain || 1, q.dy || 0)}" stroke="${C[q.c]}" stroke-width="${q.w || 3.6}"/>`;
  });
  s += '</g>';
  g.yt.forEach(([y, t]) => s += `<text x="${l - 12}" y="${y + 8}" text-anchor="end">${t}</text>`);
  if (!g.noX) ['0', '1,000', '2,000', '3,000', '4,000', '5,000'].forEach((t, i) => s += `<text x="${xs[i]}" y="${b + 30}" text-anchor="middle">${t}</text>`);
  return s + '</svg>';
}
let id = 0;
function card(g) {
  return `<div class="card"><div class="chead"><span>${g.title}</span><svg class="fit"><use href="#fit"/></svg><svg><use href="#pinO"/></svg><svg><use href="#full"/></svg><svg><use href="#more"/></svg></div>${chart(g, ++id)}</div>`;
}
document.getElementById('cards').insertAdjacentHTML('beforeend', [
  ['CWGAN_train_loss', '2 cards', [lossD, lossG]], ['CWGAN_train_metric', '2 cards', [bit, bscm]], ['CWGAN_train_preds', '', [preds]]
].map(([n, k, cs]) => `<div class="ghead">${n} <small>${k}</small><svg><use href="#up"/></svg></div><div class="gbody">${cs.map(card).join('')}</div>`).join(''));
```
